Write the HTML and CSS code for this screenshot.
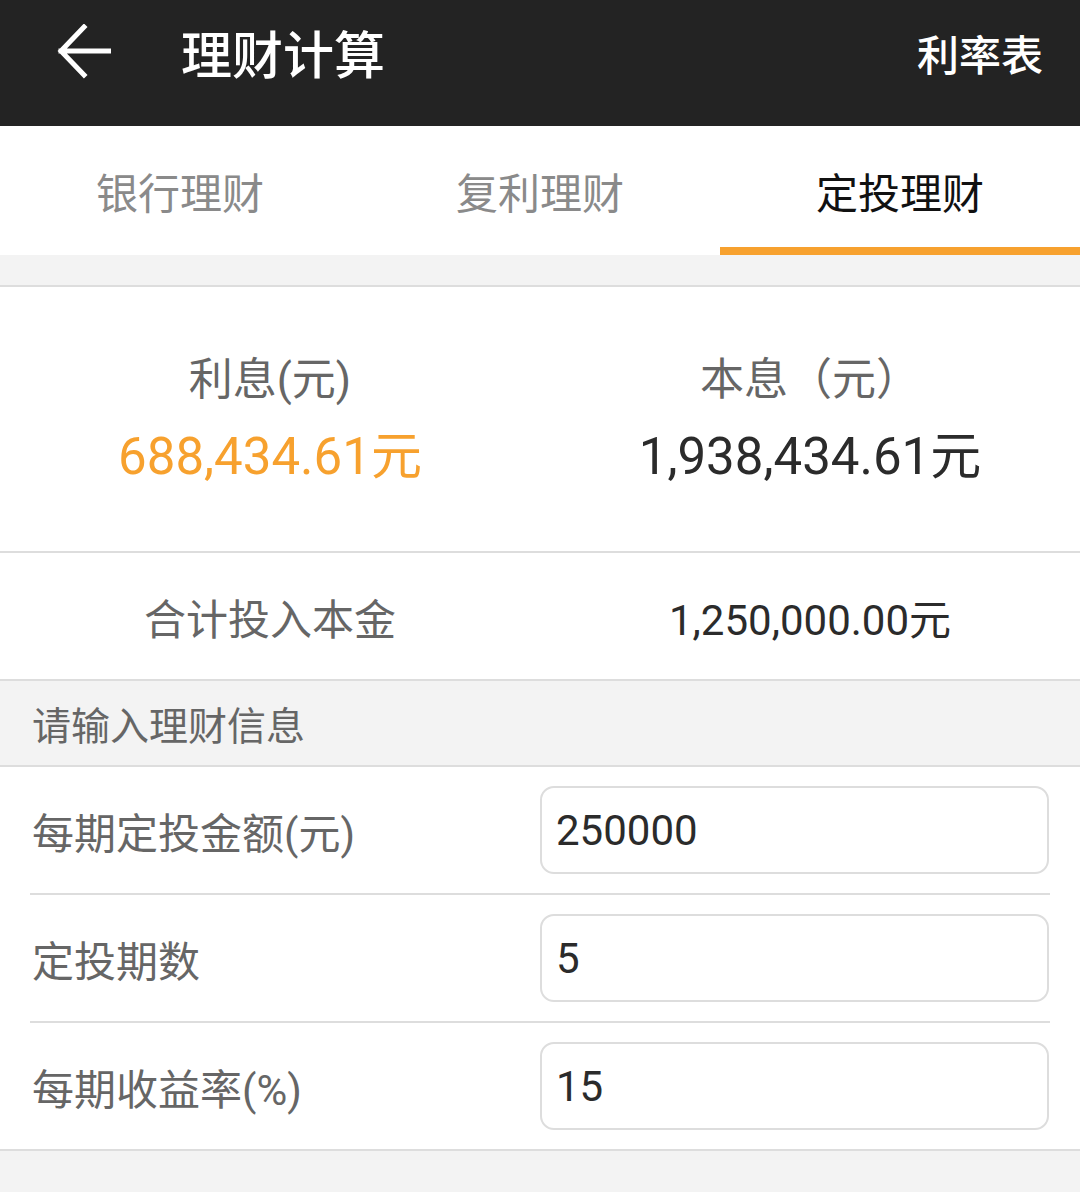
FILE: index.html
```html
<!DOCTYPE html>
<html lang="zh-CN">
<head>
  <meta charset="UTF-8" />
  <title>理财计算</title>
  <link rel="stylesheet" href="styles.css">
</head>
<body>

  <div class="topbar">
    <div class="back">
      <svg width="54" height="56" viewBox="0 0 54 56">
        <path d="M4 27 H52 M27 3 L4 27 L27 51" fill="none" stroke="#fff" stroke-width="5" stroke-linecap="square" />
      </svg>
    </div>
    <div class="title">理财计算</div>
    <div class="rate-link">利率表</div>
  </div>

  <div class="tabs">
    <div class="tab">银行理财</div>
    <div class="tab">复利理财</div>
    <div class="tab active">定投理财</div>
  </div>

  <div class="spacer"></div>

  <!-- 计算结果 -->
  <div class="results">
    <div class="result-col">
      <div class="result-label">利息(元)</div>
      <div class="result-value orange">688,434.61元</div>
    </div>
    <div class="result-col">
      <div class="result-label">本息（元）</div>
      <div class="result-value">1,938,434.61元</div>
    </div>
  </div>

  <div class="total-row">
    <div class="total-label">合计投入本金</div>
    <div class="total-value">1,250,000.00元</div>
  </div>

  <div class="section-title">请输入理财信息</div>

  <div class="form">
    <div class="form-row">
      <div class="form-label">每期定投金额(元)</div>
      <input class="form-input" type="text" value="250000">
    </div>
    <div class="form-row">
      <div class="form-label">定投期数</div>
      <input class="form-input" type="text" value="5">
    </div>
    <div class="form-row">
      <div class="form-label">每期收益率(%)</div>
      <input class="form-input" type="text" value="15">
    </div>
  </div>

</body>
</html>
```

FILE: styles.css
```css
body {
  margin: 0;
  padding: 0;
  background: #f3f3f3;
  font-family: Roboto, "Noto Sans CJK SC", sans-serif;
}

.topbar {
  height: 126px;
  box-sizing: border-box;
  padding-bottom: 22px;
  background: #232323;
  display: flex;
  align-items: center;
  color: #fff;
}

.back {
  width: 54px;
  height: 56px;
  margin-left: 57px;
}

.back svg {
  display: block;
}

.title {
  margin-left: 70px;
  font-size: 51px;
  font-weight: 500;
}

.rate-link {
  margin-left: auto;
  margin-right: 37px;
  font-size: 42px;
  font-weight: 500;
}

.tabs {
  display: grid;
  grid-template-columns: repeat(3, 1fr);
  background: #fff;
  height: 129px;
}

.tab {
  display: flex;
  align-items: center;
  justify-content: center;
  font-size: 42px;
  color: #8a8a8a;
  box-sizing: border-box;
}

.tab.active {
  color: #111;
  border-bottom: 8px solid #f7a12e;
  padding-top: 8px;
}

.spacer {
  height: 30px;
  border-bottom: 2px solid #dddddd;
}

.results {
  display: grid;
  grid-template-columns: 1fr 1fr;
  background: #fff;
  height: 266px;
  box-sizing: border-box;
  padding-top: 63px;
  border-bottom: 2px solid #dddddd;
}

.result-col {
  text-align: center;
}

.result-label {
  font-size: 44px;
  color: #666;
  line-height: 60px;
}

.result-value {
  margin-top: 17px;
  font-size: 51px;
  line-height: 60px;
  color: #2b2b2b;
}

.result-value.orange {
  color: #f7a12e;
}

.total-row {
  display: grid;
  grid-template-columns: 1fr 1fr;
  background: #fff;
  height: 128px;
  box-sizing: border-box;
  align-items: center;
  text-align: center;
  border-bottom: 2px solid #dddddd;
}

.total-label {
  font-size: 42px;
  color: #666;
}

.total-value {
  font-size: 42px;
  color: #2b2b2b;
}

.section-title {
  height: 86px;
  box-sizing: border-box;
  padding-left: 32px;
  display: flex;
  align-items: center;
  font-size: 39px;
  color: #666;
  border-bottom: 2px solid #dddddd;
}

.form {
  background: #fff;
  padding: 0 30px;
  border-bottom: 2px solid #dddddd;
}

.form-row {
  display: flex;
  align-items: center;
  height: 128px;
  box-sizing: border-box;
  border-bottom: 2px solid #dddddd;
}

.form-row:last-child {
  border-bottom: none;
  height: 126px;
}

.form-label {
  flex: 1;
  padding-left: 2px;
  font-size: 42px;
  color: #666;
}

.form-input {
  width: 509px;
  height: 88px;
  box-sizing: border-box;
  margin-right: 1px;
  border: 2px solid #dddddd;
  border-radius: 14px;
  padding: 0 0 0 14px;
  font-family: Roboto, sans-serif;
  font-size: 42px;
  color: #2b2b2b;
  background: #fff;
  outline: none;
}
```
